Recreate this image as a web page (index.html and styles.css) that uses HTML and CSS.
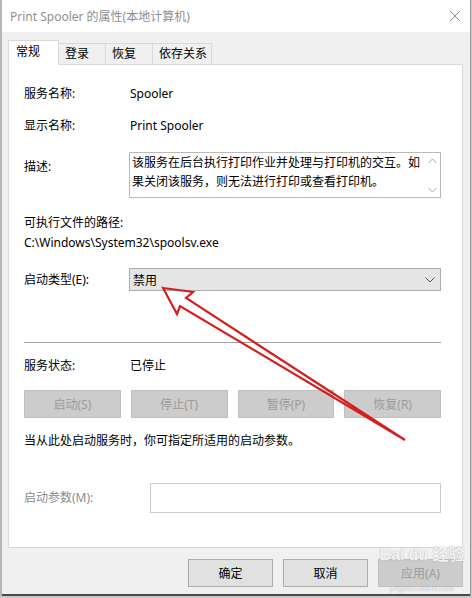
FILE: index.html
```html
<!DOCTYPE html>
<html lang="zh-CN">
<head>
<meta charset="UTF-8" />
<title>Print Spooler 的属性(本地计算机)</title>
<link rel="stylesheet" href="styles.css">
</head>
<body>

  <div class="window">
    <div class="titlebar">
      <span class="title">Print Spooler 的属性(本地计算机)</span>
      <svg class="close" width="12" height="12" viewBox="0 0 12 12">
        <path d="M1 1 L11 11 M11 1 L1 11" stroke="#8a8a8a" stroke-width="1" fill="none"/>
      </svg>
    </div>

    <div class="body">
      <div class="tabs">
        <div class="tab tab-active">常规</div>
        <div class="tab">登录</div>
        <div class="tab">恢复</div>
        <div class="tab">依存关系</div>
      </div>

      <div class="panel">
        <div class="row row-name">
          <span class="label">服务名称:</span>
          <span class="value">Spooler</span>
        </div>
        <div class="row row-display">
          <span class="label">显示名称:</span>
          <span class="value">Print Spooler</span>
        </div>
        <div class="row row-desc">
          <span class="label label-desc">描述:</span>
          <div class="desc-box">
            <div class="desc-text">该服务在后台执行打印作业并处理与打印机的交互。如果关闭该服务，则无法进行打印或查看打印机。</div>
            <div class="desc-scroll">
              <svg width="9" height="6" viewBox="0 0 9 6"><path d="M0.5 5 L4.5 1 L8.5 5" stroke="#a6a6a6" fill="none"/></svg>
              <svg width="9" height="6" viewBox="0 0 9 6"><path d="M0.5 1 L4.5 5 L8.5 1" stroke="#a6a6a6" fill="none"/></svg>
            </div>
          </div>
        </div>

        <div class="path-label">可执行文件的路径:</div>
        <div class="path-value">C:\Windows\System32\spoolsv.exe</div>

        <div class="row row-startup">
          <span class="label">启动类型(E):</span>
          <div class="combo">
            <span>禁用</span>
            <svg width="10" height="6" viewBox="0 0 10 6"><path d="M0.5 0.5 L5 5 L9.5 0.5" stroke="#555" fill="none"/></svg>
          </div>
        </div>

        <div class="separator"></div>

        <div class="row row-status">
          <span class="label">服务状态:</span>
          <span class="value">已停止</span>
        </div>

        <div class="state-buttons">
          <button class="btn btn-disabled">启动(S)</button>
          <button class="btn btn-disabled">停止(T)</button>
          <button class="btn btn-disabled">暂停(P)</button>
          <button class="btn btn-disabled">恢复(R)</button>
        </div>

        <div class="hint">当从此处启动服务时，你可指定所适用的启动参数。</div>

        <div class="row row-params">
          <span class="label label-gray">启动参数(M):</span>
          <div class="param-input"></div>
        </div>
      </div>

      <div class="footer">
        <button class="btn btn-footer">确定</button>
        <button class="btn btn-footer">取消</button>
        <button class="btn btn-footer btn-disabled">应用(A)</button>
      </div>
    </div>

    <div class="watermark wm-top">Bai<span class="wm-du">du</span> 经验</div>
    <div class="watermark wm-bottom">jingyan.baidu.com</div>

    <svg class="arrow" width="472" height="598" viewBox="0 0 472 598">
      <path d="M163 288 L193 292 L186 298 L405 440 L180 306 L177 314 Z"
            fill="none" stroke="#d41f1f" stroke-width="2.2" stroke-linejoin="miter"/>
    </svg>
  </div>

</body>
</html>
```

FILE: styles.css
```css
* {
  box-sizing: border-box;
}

body {
  margin: 0;
  width: 472px;
  height: 598px;
  background: #c9c9c9;
  font-family: "Noto Sans", "Noto Sans CJK SC", sans-serif;
  font-size: 12px;
  color: #000;
  overflow: hidden;
}

.window {
  position: relative;
  width: 471px;
  height: 596px;
  border-left: 2px solid #b4b4b4;
  border-right: 1px solid #9a9a9a;
  background: #f0f0f0;
}

.titlebar {
  height: 32px;
  background: #fff;
  display: flex;
  align-items: center;
  justify-content: space-between;
  padding: 0 9px 0 8px;
}

.title {
  color: #8f8f8f;
  font-size: 12px;
}

.body {
  padding: 8px 7px 0 6px;
  height: 564px;
  border-bottom: 2px solid #4a4a4a;
}

/* Tabs */

.tabs {
  display: flex;
  align-items: flex-end;
  height: 24px;
}

.tab {
  height: 21px;
  padding: 0 0 0 6px;
  border: 1px solid #d9d9d9;
  border-bottom: none;
  border-left: none;
  background: #f0f0f0;
  display: flex;
  align-items: center;
  white-space: nowrap;
  line-height: 1;
}

.tab-active {
  height: 25px;
  width: 51px;
  padding: 0 0 2px 7px;
  border-left: 1px solid #d9d9d9;
  background: #fff;
  margin-bottom: -1px;
  position: relative;
}

.tab:nth-child(2) { width: 47px; }
.tab:nth-child(3) { width: 47px; }
.tab:nth-child(4) { width: 59px; }

/* Panel */

.panel {
  background: #fff;
  border: 1px solid #d9d9d9;
  height: 484px;
  padding: 19px 20px 0 15px;
}

.row {
  display: flex;
  align-items: center;
}

.label {
  width: 106px;
  flex: none;
  line-height: 20px;
}

.label-gray {
  color: #8d8d8d;
}

.value {
  line-height: 20px;
}

.row-display {
  margin-top: 12px;
}

.row-desc {
  margin-top: 16px;
  align-items: flex-start;
}

.label-desc {
  margin-top: 5px;
}

.desc-box {
  width: 312px;
  height: 46px;
  margin-left: -1px;
  border: 1px solid #b9b9b9;
  display: flex;
}

.desc-text {
  flex: 1;
  padding: 0 2px;
  line-height: 19px;
}

.desc-scroll {
  width: 16px;
  display: flex;
  flex-direction: column;
  justify-content: space-between;
  align-items: center;
  padding: 5px 0 4px;
}

.path-label {
  margin-top: 15px;
  line-height: 20px;
}

.path-value {
  line-height: 20px;
}

.row-startup {
  margin-top: 15px;
}

.combo {
  width: 312px;
  height: 23px;
  margin-left: -1px;
  background: #e5e5e5;
  border: 1px solid #adadad;
  display: flex;
  align-items: center;
  justify-content: space-between;
  padding: 0 5px 0 3px;
}

.separator {
  margin-top: 51px;
  height: 1px;
  width: 417px;
  background: #a0a0a0;
}

.row-status {
  margin-top: 13px;
}

.state-buttons {
  margin-top: 14px;
  display: grid;
  grid-template-columns: repeat(4, 1fr);
  column-gap: 10px;
  width: 417px;
}

.btn {
  font-family: inherit;
  font-size: 12px;
  height: 28px;
  padding: 0;
  border: 1px solid #adadad;
  background: #e1e1e1;
  color: #000;
}

.btn-disabled {
  background: #cccccc;
  border-color: #bfbfbf;
  color: #9b9b9b;
}

.hint {
  margin-top: 13px;
  line-height: 20px;
}

.row-params {
  margin-top: 32px;
}

.param-input {
  width: 291px;
  height: 30px;
  margin-left: 20px;
  border: 1px solid #cccccc;
  background: #fff;
}

/* Footer */

.footer {
  display: flex;
  justify-content: flex-end;
  gap: 10px;
  margin-top: 11px;
}

.btn-footer {
  width: 85px;
  height: 28px;
}

/* Watermark over the apply button */

.watermark {
  position: absolute;
  left: 372px;
  width: 96px;
  text-align: center;
  pointer-events: none;
  color: rgba(255, 255, 255, 0.9);
  text-shadow: 0 0 1px rgba(110, 110, 110, 0.7);
  font-family: "Liberation Sans", "Noto Sans CJK SC", sans-serif;
}

.wm-top {
  top: 546px;
  font-size: 16px;
  font-weight: bold;
  line-height: 18px;
}

.wm-du {
  margin-left: 4px;
}

.wm-bottom {
  top: 585px;
  font-size: 8px;
  line-height: 8px;
}

.arrow {
  position: absolute;
  left: -2px;
  top: 0;
  pointer-events: none;
}
```
